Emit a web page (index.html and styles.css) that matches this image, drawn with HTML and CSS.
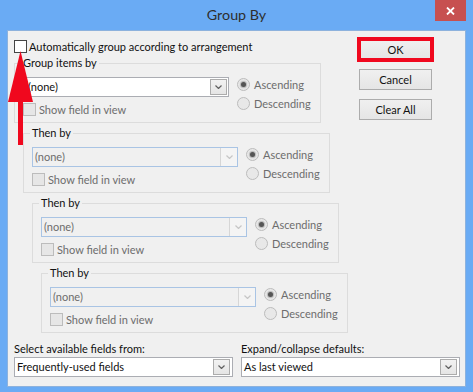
FILE: index.html
```html
<!DOCTYPE html>
<html>
<head>
<meta charset="utf-8">
<title>Group By</title>
<link rel="stylesheet" href="styles.css">
</head>
<body>
<div class="window">
  <div class="titlebar">
    <div class="title">Group By</div>
    <div class="close"><svg width="9" height="8" viewBox="0 0 9 8"><path d="M1 0.5L8 7.5M8 0.5L1 7.5" stroke="#fff" stroke-width="1.8" fill="none"/></svg></div>
  </div>
  <div class="client">
    <div class="top">
      <div class="leftcol">
        <div class="autorow"><span class="cb"></span><span>Automatically group according to arrangement</span></div>

        <fieldset class="grp g1">
          <legend>Group items by</legend>
          <div class="grp-body">
            <div class="fieldcol">
              <div class="combo"><span class="val">(none)</span><span class="dd"><svg width="7" height="4" viewBox="0 0 7 4"><path d="M0.5 0.5L3.5 3.5L6.5 0.5" fill="none" stroke="#606060" stroke-width="1.2"/></svg></span></div>
              <div class="showrow"><span class="cb dis"></span><span>Show field in view</span></div>
            </div>
            <div class="radios">
              <div class="rrow"><span class="rb on"></span><span>Ascending</span></div>
              <div class="rrow"><span class="rb"></span><span>Descending</span></div>
            </div>
          </div>
        </fieldset>

        <fieldset class="grp g2">
          <legend>Then by</legend>
          <div class="grp-body">
            <div class="fieldcol">
              <div class="combo dis"><span class="val">(none)</span><span class="dd"><svg width="7" height="4" viewBox="0 0 7 4"><path d="M0.5 0.5L3.5 3.5L6.5 0.5" fill="none" stroke="#c6c6c6" stroke-width="1.2"/></svg></span></div>
              <div class="showrow"><span class="cb dis"></span><span>Show field in view</span></div>
            </div>
            <div class="radios">
              <div class="rrow"><span class="rb on"></span><span>Ascending</span></div>
              <div class="rrow"><span class="rb"></span><span>Descending</span></div>
            </div>
          </div>
        </fieldset>

        <fieldset class="grp g3">
          <legend>Then by</legend>
          <div class="grp-body">
            <div class="fieldcol">
              <div class="combo dis"><span class="val">(none)</span><span class="dd"><svg width="7" height="4" viewBox="0 0 7 4"><path d="M0.5 0.5L3.5 3.5L6.5 0.5" fill="none" stroke="#c6c6c6" stroke-width="1.2"/></svg></span></div>
              <div class="showrow"><span class="cb dis"></span><span>Show field in view</span></div>
            </div>
            <div class="radios">
              <div class="rrow"><span class="rb on"></span><span>Ascending</span></div>
              <div class="rrow"><span class="rb"></span><span>Descending</span></div>
            </div>
          </div>
        </fieldset>

        <fieldset class="grp g4">
          <legend>Then by</legend>
          <div class="grp-body">
            <div class="fieldcol">
              <div class="combo dis"><span class="val">(none)</span><span class="dd"><svg width="7" height="4" viewBox="0 0 7 4"><path d="M0.5 0.5L3.5 3.5L6.5 0.5" fill="none" stroke="#c6c6c6" stroke-width="1.2"/></svg></span></div>
              <div class="showrow"><span class="cb dis"></span><span>Show field in view</span></div>
            </div>
            <div class="radios">
              <div class="rrow"><span class="rb on"></span><span>Ascending</span></div>
              <div class="rrow"><span class="rb"></span><span>Descending</span></div>
            </div>
          </div>
        </fieldset>
      </div>

      <div class="buttons">
        <div class="btn ok">OK</div>
        <div class="btn">Cancel</div>
        <div class="btn">Clear All</div>
      </div>
    </div>

    <div class="bottom">
      <div class="bcol">
        <div class="blabel">Select available fields from:</div>
        <div class="combo big"><span class="val">Frequently-used fields</span><span class="dd"><svg width="7" height="4" viewBox="0 0 7 4"><path d="M0.5 0.5L3.5 3.5L6.5 0.5" fill="none" stroke="#606060" stroke-width="1.2"/></svg></span></div>
      </div>
      <div class="bcol">
        <div class="blabel">Expand/collapse defaults:</div>
        <div class="combo big"><span class="val">As last viewed</span><span class="dd"><svg width="7" height="4" viewBox="0 0 7 4"><path d="M0.5 0.5L3.5 3.5L6.5 0.5" fill="none" stroke="#606060" stroke-width="1.2"/></svg></span></div>
      </div>
    </div>
  </div>

  <svg class="arrow" width="40" height="150" viewBox="0 0 40 150">
    <polygon points="20.5,51 8,102 33,102" fill="#f0081e"/>
    <rect x="18" y="101" width="5" height="44" fill="#f0081e"/>
  </svg>
</div>
</body>
</html>
```

FILE: styles.css
```css
* { box-sizing: border-box; }

html, body {
  margin: 0;
  padding: 0;
}

body {
  width: 473px;
  height: 392px;
  overflow: hidden;
  font-family: Lato, "Liberation Sans", sans-serif;
  font-size: 11px;
  color: #111;
  background: #6aabf4;
}

.window {
  position: relative;
  width: 473px;
  height: 392px;
  background: #6aabf4;
  display: flex;
  flex-direction: column;
}

.titlebar {
  height: 30px;
  display: grid;
  grid-template-columns: 1fr auto 1fr;
  align-items: start;
}

.title {
  grid-column: 2;
  font-size: 14.3px;
  line-height: 30px;
  color: #2e2e2e;
}

.close {
  grid-column: 3;
  justify-self: end;
  margin-right: 7px;
  width: 31px;
  height: 21px;
  background: #c75050;
  display: flex;
  align-items: center;
  justify-content: center;
}

.client {
  margin: 0 7px;
  height: 357px;
  background: #f0f0f0;
  border: 1px solid #8db2dd;
  display: flex;
  flex-direction: column;
}

.top {
  display: flex;
  padding-left: 6px;
}

.leftcol {
  flex: none;
  padding-top: 7px;
}

.autorow {
  display: flex;
  align-items: center;
  height: 16px;
  gap: 2px;
}

.cb {
  flex: none;
  width: 13px;
  height: 13px;
  border: 1px solid #444;
  background: #fff;
}

.cb.dis {
  border-color: #bcbcbc;
  background: #e6e6e6;
}

.grp {
  margin: 1px 0 0 0;
  padding: 6px 8px 5px 8px;
  border: 1px solid #dcdcdc;
  width: 307px;
  min-width: 0;
}

.grp + .grp { margin-top: 2px; }
.g2 { margin-left: 9px; }
.g3 { margin-left: 18px; }
.g4 { margin-left: 27px; }

.grp legend {
  padding: 0 2px;
  margin-left: -2px;
  line-height: 16px;
  color: #111;
}

.grp-body {
  display: flex;
}

.fieldcol {
  flex: none;
  width: 206px;
}

.combo {
  height: 20px;
  border: 1px solid #abadb3;
  background: #fff;
  display: flex;
  align-items: center;
  padding-left: 2px;
}

.g1 .combo {
  padding-left: 4px;
}

.combo .val {
  flex: 1;
  line-height: 18px;
  white-space: nowrap;
}

.dd {
  flex: none;
  width: 17px;
  height: 16px;
  margin-right: 1px;
  border: 1px solid #acacac;
  background: linear-gradient(#f2f2f2, #e5e5e5);
  display: flex;
  align-items: center;
  justify-content: center;
}

.combo.dis {
  background: #f0f0f0;
  border-color: #a9c4e4;
  color: #6d6d6d;
}

.combo.dis .dd {
  height: 18px;
  margin-right: 0;
  border: none;
  border-left: 1px solid #d6d6d6;
  background: #f4f4f4;
}

.combo.big .dd {
  margin-right: 2px;
}

.showrow {
  display: flex;
  align-items: center;
  height: 15px;
  margin-top: 5px;
  gap: 3px;
  color: #6d6d6d;
}

.radios {
  margin-left: 8px;
  margin-top: -2px;
  color: #6d6d6d;
}

.rrow {
  height: 19px;
  display: flex;
  align-items: center;
  gap: 4px;
  white-space: nowrap;
}

.rb {
  flex: none;
  width: 13px;
  height: 13px;
  border-radius: 50%;
  border: 1px solid #bcbcbc;
  background: #e8e8e8;
  display: flex;
  align-items: center;
  justify-content: center;
}

.rb.on::after {
  content: "";
  width: 5px;
  height: 5px;
  border-radius: 50%;
  background: #555;
  box-shadow: 0 0 1px 1px rgba(85, 85, 85, 0.35);
}

.buttons {
  margin-left: auto;
  margin-right: 33px;
  padding-top: 8px;
  display: flex;
  flex-direction: column;
  gap: 9px;
}

.btn {
  width: 73px;
  height: 21px;
  border: 1px solid #acacac;
  background: linear-gradient(#f0f0f0, #e5e5e5);
  display: flex;
  align-items: center;
  justify-content: center;
  color: #111;
}

.btn.ok {
  outline: 4px solid #f0081e;
  outline-offset: -2px;
}

.bottom {
  display: grid;
  grid-template-columns: 219px 219px;
  column-gap: 8px;
  padding-left: 6px;
  margin-top: 8px;
}

.blabel {
  line-height: 16px;
}

.arrow {
  position: absolute;
  left: 0;
  top: 0;
  pointer-events: none;
}
```
